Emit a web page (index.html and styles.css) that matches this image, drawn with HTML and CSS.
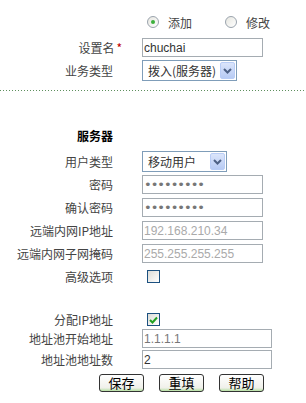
FILE: index.html
```html
<!DOCTYPE html>
<html lang="zh-CN">
<head>
    <meta charset="UTF-8">
    <meta name="viewport" content="width=device-width, initial-scale=1.0">
    <title>拨入设置</title>
    <link rel="stylesheet" href="styles.css">
</head>
<body>
    <div class="page">
        <div class="row radio-row">
            <span class="label"></span>
            <div class="ctrl">
                <span class="radio checked"></span><span class="radio-text">添加</span>
                <span class="radio"></span><span class="radio-text">修改</span>
            </div>
        </div>
        <div class="row first">
            <span class="label">设置名<span class="star">*</span></span>
            <div class="ctrl"><input class="text" type="text" value="chuchai"></div>
        </div>
        <div class="row">
            <span class="label">业务类型</span>
            <div class="ctrl">
                <div class="select select-wide">
                    <span class="select-text">拨入(服务器)</span>
                    <span class="arrow"><svg width="9" height="6" viewBox="0 0 9 6"><path d="M1 1 L4.5 4.5 L8 1" fill="none" stroke="#4d6185" stroke-width="2"/></svg></span>
                </div>
            </div>
        </div>

        <div class="divider"></div>

        <div class="row heading-row">
            <span class="label heading">服务器</span>
        </div>
        <div class="row first">
            <span class="label">用户类型</span>
            <div class="ctrl">
                <div class="select select-narrow">
                    <span class="select-text">移动用户</span>
                    <span class="arrow"><svg width="9" height="6" viewBox="0 0 9 6"><path d="M1 1 L4.5 4.5 L8 1" fill="none" stroke="#4d6185" stroke-width="2"/></svg></span>
                </div>
            </div>
        </div>
        <div class="row">
            <span class="label">密码</span>
            <div class="ctrl"><input class="text pass" type="password" value="123456789"></div>
        </div>
        <div class="row">
            <span class="label">确认密码</span>
            <div class="ctrl"><input class="text pass" type="password" value="123456789"></div>
        </div>
        <div class="row">
            <span class="label">远端内网IP地址</span>
            <div class="ctrl"><input class="text dim" type="text" value="192.168.210.34"></div>
        </div>
        <div class="row">
            <span class="label">远端内网子网掩码</span>
            <div class="ctrl"><input class="text dim" type="text" value="255.255.255.255"></div>
        </div>
        <div class="row">
            <span class="label">高级选项</span>
            <div class="ctrl"><span class="check"></span></div>
        </div>

        <div class="row short pool-first">
            <span class="label">分配IP地址</span>
            <div class="ctrl">
                <span class="check"><svg width="9" height="8" viewBox="0 0 9 8"><path d="M1 4 L3.5 6.5 L8 1.5" fill="none" stroke="#21a121" stroke-width="2"/></svg></span>
            </div>
        </div>
        <div class="row short">
            <span class="label">地址池开始地址</span>
            <div class="ctrl"><input class="text wide mid" type="text" value="1.1.1.1"></div>
        </div>
        <div class="row short spaced">
            <span class="label">地址池地址数</span>
            <div class="ctrl"><input class="text wide" type="text" value="2"></div>
        </div>

        <div class="buttons">
            <button class="btn">保存</button>
            <button class="btn">重填</button>
            <button class="btn">帮助</button>
        </div>
    </div>
</body>
</html>
```

FILE: styles.css
```css
body {
    margin: 0;
    background-color: #fff;
    font-family: "Noto Sans CJK SC", sans-serif;
    font-size: 12px;
    color: #444;
}
.page {
    padding-top: 11px;
}
.row {
    display: flex;
    align-items: center;
    height: 23px;
}
.radio-row {
    height: 22px;
}
.first {
    margin-top: 3px;
}
.label {
    width: 113px;
    flex: none;
    text-align: right;
    white-space: nowrap;
}
.star {
    color: #c00000;
    margin-left: 2px;
    margin-right: -9px;
}
.ctrl {
    margin-left: 29px;
    display: flex;
    align-items: center;
}
.radio {
    width: 10px;
    height: 10px;
    border: 1px solid #9aa3ad;
    border-radius: 50%;
    background: linear-gradient(135deg, #e6e6e0, #fff);
    margin-left: 5px;
    display: flex;
    align-items: center;
    justify-content: center;
}
.radio.checked::after {
    content: "";
    width: 4px;
    height: 4px;
    border-radius: 50%;
    background-color: #3cb03c;
}
.radio-text {
    margin-left: 9px;
    margin-right: 28px;
}
.text {
    box-sizing: border-box;
    width: 121px;
    height: 19px;
    margin: 0;
    padding: 0 1px;
    border: 1px solid #a5acb2;
    font-family: "Liberation Sans", sans-serif;
    font-size: 12px;
    color: #333;
    outline: none;
}
.pass {
    font-family: "DejaVu Sans", sans-serif;
    font-size: 13px;
    letter-spacing: -1px;
    color: #777;
}
.dim {
    color: #aaa;
}
.mid {
    color: #777;
}
.wide {
    width: 130px;
}
.select {
    box-sizing: border-box;
    height: 21px;
    border: 1px solid #7f9db9;
    display: flex;
    align-items: center;
    justify-content: space-between;
    padding: 1px;
}
.select-wide {
    width: 95px;
}
.select-narrow {
    width: 85px;
}
.select-text {
    padding-left: 4px;
    font-size: 12px;
    color: #333;
}
.arrow {
    box-sizing: border-box;
    width: 15px;
    height: 17px;
    border: 1px solid #b9cdf6;
    border-radius: 2px;
    background: linear-gradient(#dbe5fb, #b7cbf4);
    display: flex;
    align-items: center;
    justify-content: center;
}
.divider {
    margin-top: 8px;
    height: 1px;
    background-image: linear-gradient(to right, #5e8f5e 1px, transparent 1px);
    background-size: 3px 1px;
}
.heading-row {
    margin-top: 32px;
    height: 24px;
}
.heading {
    font-weight: bold;
    color: #000;
}
.check {
    box-sizing: border-box;
    width: 13px;
    height: 13px;
    margin-left: 5px;
    border: 1px solid #1c5180;
    background: linear-gradient(135deg, #dcdcd7, #fff);
    display: flex;
    align-items: center;
    justify-content: center;
}
.short {
    height: 19px;
}
.pool-first {
    margin-top: 22px;
}
.spaced {
    margin-top: 2px;
}
.buttons {
    display: flex;
    gap: 15px;
    padding-left: 99px;
    margin-top: 5px;
}
.btn {
    box-sizing: border-box;
    width: 45px;
    height: 18px;
    padding: 0;
    border: 1px solid #333;
    border-radius: 3px;
    background: linear-gradient(#fff, #f0f0ea 80%, #b6e0a2);
    font-family: "Noto Sans CJK SC", sans-serif;
    font-size: 13px;
    line-height: 16px;
    color: #000;
}
```
